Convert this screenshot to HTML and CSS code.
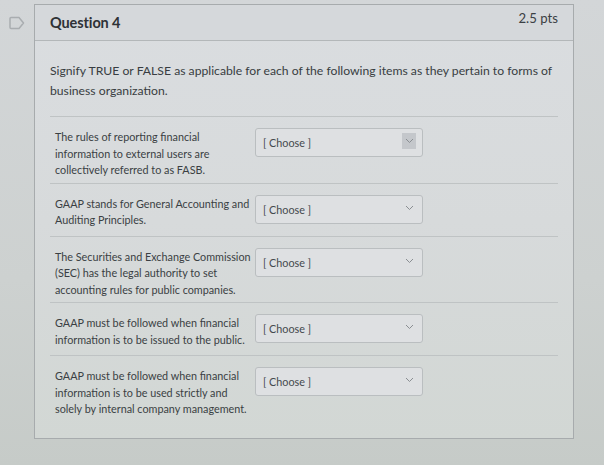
FILE: index.html
```html
<!DOCTYPE html>
<html>
<head>
<meta charset="utf-8">
<link rel="stylesheet" href="styles.css">
</head>
<body>
<div class="page">
  <div class="flag-col">
    <svg class="flag" width="16" height="14" viewBox="0 0 16 14">
      <path d="M2 1.5 H10 L14.5 7 L10 12.5 H2 Q1 12.5 1 11.5 V2.5 Q1 1.5 2 1.5 Z" fill="none" stroke="#a9adb0" stroke-width="1.5" stroke-linejoin="round"/>
    </svg>
  </div>
  <div class="card">
    <div class="header">
      <span class="qname">Question 4</span>
      <span class="pts">2.5 pts</span>
    </div>
    <div class="body">
      <p class="prompt">Signify TRUE or FALSE as applicable for each of the following items as they pertain to forms of business organization.</p>
      <div class="rows">
        <div class="row">
          <div class="stmt">The rules of reporting financial information to external users are collectively referred to as FASB.</div>
          <div class="sel hover"><span>[ Choose ]</span><span class="arrow"><svg width="9" height="6" viewBox="0 0 9 6"><path d="M1 1 L4.5 4.5 L8 1" fill="none" stroke="#8a8e92" stroke-width="1"/></svg></span></div>
        </div>
        <div class="row">
          <div class="stmt">GAAP stands for General Accounting and Auditing Principles.</div>
          <div class="sel"><span>[ Choose ]</span><span class="arrow"><svg width="9" height="6" viewBox="0 0 9 6"><path d="M1 1 L4.5 4.5 L8 1" fill="none" stroke="#8a8e92" stroke-width="1"/></svg></span></div>
        </div>
        <div class="row">
          <div class="stmt">The Securities and Exchange Commission (SEC) has the legal authority to set accounting rules for public companies.</div>
          <div class="sel"><span>[ Choose ]</span><span class="arrow"><svg width="9" height="6" viewBox="0 0 9 6"><path d="M1 1 L4.5 4.5 L8 1" fill="none" stroke="#8a8e92" stroke-width="1"/></svg></span></div>
        </div>
        <div class="row">
          <div class="stmt">GAAP must be followed when financial information is to be issued to the public.</div>
          <div class="sel"><span>[ Choose ]</span><span class="arrow"><svg width="9" height="6" viewBox="0 0 9 6"><path d="M1 1 L4.5 4.5 L8 1" fill="none" stroke="#8a8e92" stroke-width="1"/></svg></span></div>
        </div>
        <div class="row">
          <div class="stmt">GAAP must be followed when financial information is to be used strictly and solely by internal company management.</div>
          <div class="sel"><span>[ Choose ]</span><span class="arrow"><svg width="9" height="6" viewBox="0 0 9 6"><path d="M1 1 L4.5 4.5 L8 1" fill="none" stroke="#8a8e92" stroke-width="1"/></svg></span></div>
        </div>
      </div>
    </div>
  </div>
</div>
</body>
</html>
```
FILE: styles.css
```css
html, body {
  margin: 0;
  padding: 0;
}
body {
  width: 604px;
  height: 465px;
  overflow: hidden;
  background: linear-gradient(180deg, #d3d6d8 0%, #cdd1d0 60%, #c6cbc8 100%);
  font-family: Lato, "Open Sans", "Liberation Sans", sans-serif;
  color: #383d41;
}
.page {
  display: flex;
  padding-top: 4px;
}
.flag-col {
  width: 34px;
  flex: none;
}
.flag {
  display: block;
  margin: 12px 0 0 9px;
}
.card {
  width: 538px;
  border: 1px solid #a7abad;
  background: linear-gradient(180deg, #dadde0 0%, #d7dadb 50%, #d2d7d4 100%);
}
.header {
  height: 35px;
  display: flex;
  justify-content: space-between;
  align-items: flex-start;
  padding: 0 15px;
  background: #d5d8db;
  border-bottom: 1px solid #b3b7b9;
}
.qname {
  font-size: 14.5px;
  font-weight: 700;
  color: #2e3236;
  margin-top: 9px;
  letter-spacing: -0.1px;
}
.pts {
  font-size: 13.2px;
  color: #3b4044;
  margin-top: 5px;
}
.body {
  padding: 20px 15px 16px 15px;
}
.prompt {
  margin: 0 0 15px 0;
  font-size: 12.2px;
  line-height: 20px;
  color: #383d41;
}
.rows {
  border-top: 1px solid #bfc3c4;
}
.row {
  display: flex;
  align-items: flex-start;
  padding-left: 5px;
  border-bottom: 1px solid #bfc3c4;
}
.row:last-child {
  border-bottom: none;
}
.stmt {
  width: 198px;
  flex: none;
  font-size: 10.8px;
  line-height: 16.5px;
  padding: 12px 0 4px 0;
  color: #3a3f43;
}
.sel {
  width: 168px;
  height: 29px;
  box-sizing: border-box;
  margin: 11px 0 12px 2px;
  border: 1px solid #babec0;
  border-radius: 3px;
  background: #dee0e2;
  display: flex;
  align-items: center;
  justify-content: space-between;
  padding: 0 6px 0 7px;
  font-size: 10.8px;
  color: #44494d;
}
.arrow {
  width: 14px;
  height: 16px;
  display: flex;
  align-items: center;
  justify-content: center;
  margin-top: -3px;
}
.hover .arrow {
  background: #c4c7cb;
}
```
